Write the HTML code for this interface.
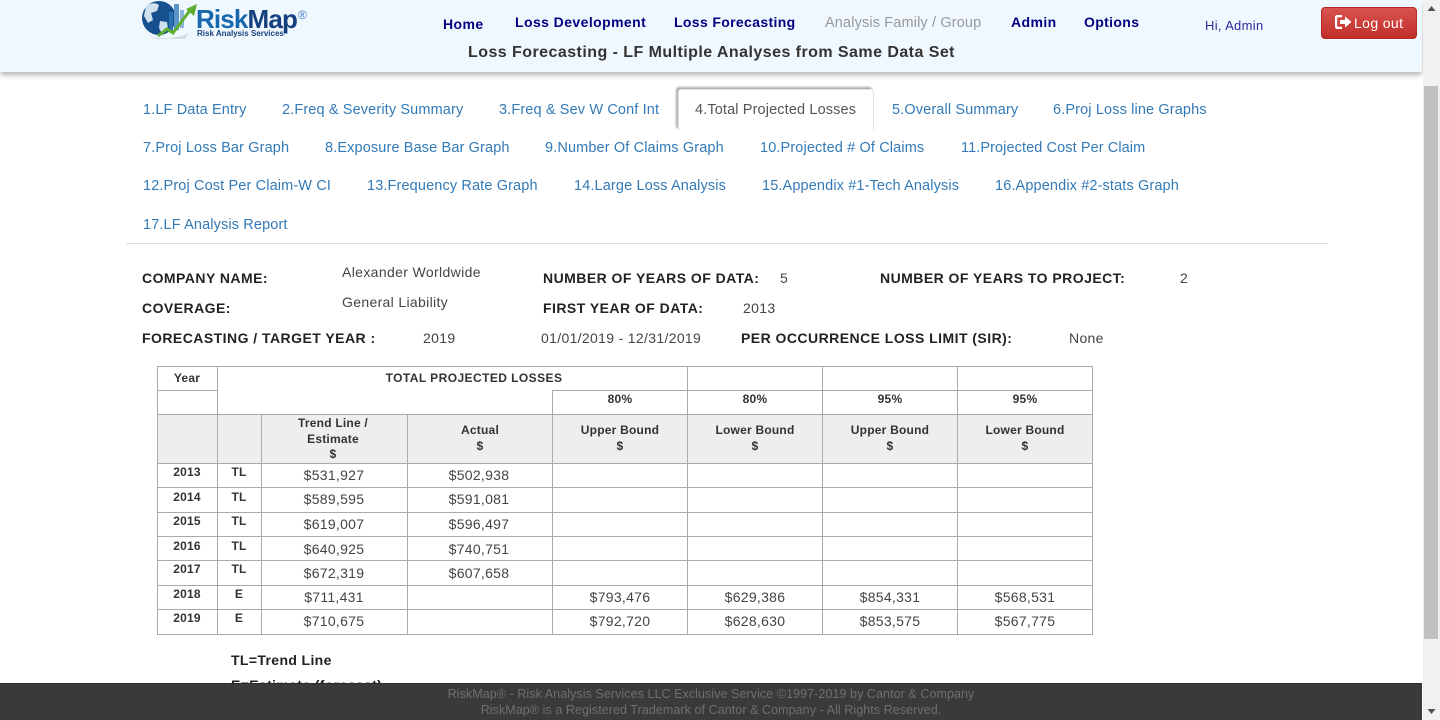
<!DOCTYPE html>
<html><head><meta charset="utf-8"><title>RiskMap</title>
<style>
html,body{margin:0;padding:0;width:1440px;height:720px;overflow:hidden;background:#fff;font-family:"Liberation Sans",Arial,sans-serif}
.t{position:absolute;white-space:nowrap;line-height:16px}
.tab{color:#337ab7;font-size:14.5px;letter-spacing:.13px}
.nav{color:#000080;font-size:14px;font-weight:bold;letter-spacing:.42px}
.l{color:#222;font-size:14px;font-weight:bold;letter-spacing:.46px}
.v{color:#444;font-size:14px;letter-spacing:.33px}
.h{position:absolute;height:1px;background:#aaa}
.w{position:absolute;width:1px;background:#aaa}
.c{position:absolute;white-space:nowrap;text-align:center;width:200px;line-height:16px}
.b{font-size:12px;font-weight:bold;color:#333;letter-spacing:.22px}
.d{font-size:14px;color:#444;letter-spacing:.28px}
.g{position:absolute;background:#eee}
</style></head><body>

<div class="t" style="left:231px;top:652px;font-size:14px;font-weight:bold;color:#222;letter-spacing:.36px">TL=Trend Line</div>
<div class="t" style="left:231px;top:677px;font-size:14px;font-weight:bold;color:#222;letter-spacing:.36px">E=Estimate (forecast)</div>

<div style="position:absolute;left:0;top:0;width:1422px;height:72px;background:#f0f8ff;box-shadow:0 3px 6px rgba(0,0,0,.3);border-radius:0 0 2px 2px"></div>

<svg style="position:absolute;left:141px;top:0" width="60" height="42" viewBox="0 0 60 42">
<path d="M8 36c12 4 28 3 40-3l-4 6H16z" fill="#c8d0d8" opacity=".75"/>
<circle cx="18" cy="18" r="17" fill="#17508f"/>
<path d="M5 6c4-3 9-4 13-1l-2 6-6 2 2 7-5 3-4-7zM19 21l7 1 1 7-6 5-3-6z" fill="#cfe0ee"/>
<path d="M28 12h4v19h-4z" fill="#2a6fb0"/><path d="M33 4h5v26h-5z" fill="#5c94c8"/><path d="M39 10h4v18h-4z" fill="#8cb4d8"/>
<path d="M17 36l9-7 6 4 18-24" fill="none" stroke="#5fae2e" stroke-width="3"/>
<path d="M45 9l11-5-3 12z" fill="#5fae2e"/>
</svg>
<div class="t" style="left:196px;top:4px;font-size:26px;line-height:30px;font-weight:bold;letter-spacing:-.85px;color:#1868ad">Risk<span style="color:#14407f">Map</span></div>
<div class="t" style="left:298px;top:9px;font-size:12px;line-height:12px;color:#3a78b5">®</div>
<div class="t" style="left:197px;top:29px;font-size:8px;line-height:9px;font-weight:bold;color:#17407a">Risk Analysis Services</div>

<div class="t nav" style="left:443px;top:16px">Home</div>
<div class="t nav" style="left:515px;top:14px">Loss Development</div>
<div class="t nav" style="left:674px;top:14px;letter-spacing:.35px">Loss Forecasting</div>
<div class="t" style="left:825px;top:15px;font-size:14.5px;color:#999;letter-spacing:.14px">Analysis Family / Group</div>
<div class="t nav" style="left:1011px;top:14px">Admin</div>
<div class="t nav" style="left:1084px;top:14px;letter-spacing:.35px">Options</div>
<div class="t" style="left:1205px;top:18px;font-size:13px;color:#2a2a9a;letter-spacing:.32px">Hi, Admin</div>
<div class="t" style="left:468px;top:45px;font-size:16px;font-weight:bold;color:#333;letter-spacing:.45px">Loss Forecasting - LF Multiple Analyses from Same Data Set</div>

<div style="position:absolute;left:1321px;top:7px;width:94px;height:30px;border:1px solid #b52b27;border-radius:4px;background:linear-gradient(#d9534f,#c12e2a)"></div>
<svg style="position:absolute;left:1335px;top:15px" width="17" height="14" viewBox="0 0 17 14"><path d="M7 1H3Q1 1 1 3v8q0 2 2 2h4" fill="none" stroke="#fff" stroke-width="2.4"/><path d="M5 5h5V1.500L16.500 7 10 12.500V9H5z" fill="#fff"/></svg>
<div class="t" style="left:1354px;top:15px;font-size:14px;color:#fff;letter-spacing:.38px">Log out</div>

<div style="position:absolute;left:1423px;top:0;width:17px;height:720px;background:#f1f1f1"></div>
<div style="position:absolute;left:1424px;top:86px;width:14px;height:553px;background:#c1c1c1"></div>
<svg style="position:absolute;left:1423px;top:0" width="17" height="720"><path d="M4.500 11L8.500 6l4 5z" fill="#505050"/><path d="M4.500 709l4 5 4-5z" fill="#505050"/></svg>

<div style="position:absolute;left:678px;top:89px;width:194px;height:40px;background:#fff;border:1px solid #e4e4e4;border-bottom:0;border-radius:3px 3px 0 0;box-shadow:-2px -2px 2px #aaa"></div>

<div class="t tab" style="left:143px;top:101.500px">1.LF Data Entry</div>
<div class="t tab" style="left:282px;top:101.500px">2.Freq &amp; Severity Summary</div>
<div class="t tab" style="left:499px;top:101.500px">3.Freq &amp; Sev W Conf Int</div>
<div class="t tab" style="left:695px;top:101.500px;color:#555">4.Total Projected Losses</div>
<div class="t tab" style="left:892px;top:101.500px">5.Overall Summary</div>
<div class="t tab" style="left:1053px;top:101.500px">6.Proj Loss line Graphs</div>
<div class="t tab" style="left:143px;top:140px">7.Proj Loss Bar Graph</div>
<div class="t tab" style="left:325px;top:140px">8.Exposure Base Bar Graph</div>
<div class="t tab" style="left:545px;top:140px">9.Number Of Claims Graph</div>
<div class="t tab" style="left:760px;top:140px">10.Projected # Of Claims</div>
<div class="t tab" style="left:961px;top:140px;letter-spacing:.09px">11.Projected Cost Per Claim</div>
<div class="t tab" style="left:143px;top:178px">12.Proj Cost Per Claim-W CI</div>
<div class="t tab" style="left:367px;top:178px">13.Frequency Rate Graph</div>
<div class="t tab" style="left:574px;top:178px">14.Large Loss Analysis</div>
<div class="t tab" style="left:762px;top:178px">15.Appendix #1-Tech Analysis</div>
<div class="t tab" style="left:995px;top:178px">16.Appendix #2-stats Graph</div>
<div class="t tab" style="left:143px;top:217px">17.LF Analysis Report</div>
<div style="position:absolute;left:126px;top:243px;width:1202px;height:1px;background:#ddd"></div>

<div class="t l" style="left:142px;top:270px">COMPANY NAME:</div>
<div class="t v" style="left:342px;top:264px;letter-spacing:.36px">Alexander Worldwide</div>
<div class="t l" style="left:543px;top:270px">NUMBER OF YEARS OF DATA:</div>
<div class="t v" style="left:780px;top:270px">5</div>
<div class="t l" style="left:880px;top:270px">NUMBER OF YEARS TO PROJECT:</div>
<div class="t v" style="left:1180px;top:270px">2</div>
<div class="t l" style="left:142px;top:300px">COVERAGE:</div>
<div class="t v" style="left:342px;top:294px">General Liability</div>
<div class="t l" style="left:543px;top:300px">FIRST YEAR OF DATA:</div>
<div class="t v" style="left:743px;top:300px">2013</div>
<div class="t l" style="left:142px;top:330px">FORECASTING / TARGET YEAR :</div>
<div class="t v" style="left:423px;top:330px">2019</div>
<div class="t v" style="left:541px;top:330px">01/01/2019 - 12/31/2019</div>
<div class="t l" style="left:741px;top:330px">PER OCCURRENCE LOSS LIMIT (SIR):</div>
<div class="t v" style="left:1069px;top:330px">None</div>

<!-- table shading -->
<div class="g" style="left:157px;top:414px;width:935px;height:49px"></div>

<!-- horizontals -->
<div class="h" style="left:157px;top:366px;width:936px"></div>
<div class="h" style="left:157px;top:390px;width:61px"></div>
<div class="h" style="left:552px;top:390px;width:541px"></div>
<div class="h" style="left:157px;top:414px;width:936px"></div>
<div class="h" style="left:157px;top:463px;width:936px"></div>
<div class="h" style="left:157px;top:487px;width:936px"></div>
<div class="h" style="left:157px;top:512px;width:936px"></div>
<div class="h" style="left:157px;top:536px;width:936px"></div>
<div class="h" style="left:157px;top:560px;width:936px"></div>
<div class="h" style="left:157px;top:585px;width:936px"></div>
<div class="h" style="left:157px;top:609px;width:936px"></div>
<div class="h" style="left:157px;top:634px;width:936px"></div>
<!-- verticals -->
<div class="w" style="left:157px;top:366px;height:269px"></div>
<div class="w" style="left:217px;top:366px;height:269px"></div>
<div class="w" style="left:261px;top:414px;height:221px"></div>
<div class="w" style="left:407px;top:414px;height:221px"></div>
<div class="w" style="left:552px;top:390px;height:245px"></div>
<div class="w" style="left:687px;top:366px;height:269px"></div>
<div class="w" style="left:822px;top:366px;height:269px"></div>
<div class="w" style="left:957px;top:366px;height:269px"></div>
<div class="w" style="left:1092px;top:366px;height:269px"></div>

<!-- table header -->
<div class="c b" style="left:87px;top:370px">Year</div>
<div class="c b" style="left:374px;top:370px;letter-spacing:.43px">TOTAL PROJECTED LOSSES</div>
<div class="c b" style="left:520px;top:391px">80%</div>
<div class="c b" style="left:655px;top:391px">80%</div>
<div class="c b" style="left:790px;top:391px">95%</div>
<div class="c b" style="left:925px;top:391px">95%</div>
<div class="c b" style="left:233px;top:415px">Trend Line /</div>
<div class="c b" style="left:233px;top:431px">Estimate</div>
<div class="c b" style="left:233px;top:446px">$</div>
<div class="c b" style="left:380px;top:422px">Actual</div>
<div class="c b" style="left:380px;top:438px">$</div>
<div class="c b" style="left:520px;top:422px">Upper Bound</div>
<div class="c b" style="left:520px;top:438px">$</div>
<div class="c b" style="left:655px;top:422px">Lower Bound</div>
<div class="c b" style="left:655px;top:438px">$</div>
<div class="c b" style="left:790px;top:422px">Upper Bound</div>
<div class="c b" style="left:790px;top:438px">$</div>
<div class="c b" style="left:925px;top:422px">Lower Bound</div>
<div class="c b" style="left:925px;top:438px">$</div>

<!-- rows -->
<div class="c b" style="left:87px;top:464px">2013</div><div class="c b" style="left:139px;top:464px">TL</div><div class="c d" style="left:234px;top:467px">$531,927</div><div class="c d" style="left:379px;top:467px">$502,938</div>
<div class="c b" style="left:87px;top:489px">2014</div><div class="c b" style="left:139px;top:489px">TL</div><div class="c d" style="left:234px;top:491px">$589,595</div><div class="c d" style="left:379px;top:491px">$591,081</div>
<div class="c b" style="left:87px;top:513px">2015</div><div class="c b" style="left:139px;top:513px">TL</div><div class="c d" style="left:234px;top:516px">$619,007</div><div class="c d" style="left:379px;top:516px">$596,497</div>
<div class="c b" style="left:87px;top:538px">2016</div><div class="c b" style="left:139px;top:538px">TL</div><div class="c d" style="left:234px;top:541px">$640,925</div><div class="c d" style="left:379px;top:541px">$740,751</div>
<div class="c b" style="left:87px;top:561px">2017</div><div class="c b" style="left:139px;top:561px">TL</div><div class="c d" style="left:234px;top:565px">$672,319</div><div class="c d" style="left:379px;top:565px">$607,658</div>
<div class="c b" style="left:87px;top:586px">2018</div><div class="c b" style="left:139px;top:586px">E</div><div class="c d" style="left:234px;top:589px">$711,431</div><div class="c d" style="left:520px;top:589px">$793,476</div><div class="c d" style="left:655px;top:589px">$629,386</div><div class="c d" style="left:790px;top:589px">$854,331</div><div class="c d" style="left:925px;top:589px">$568,531</div>
<div class="c b" style="left:87px;top:610px">2019</div><div class="c b" style="left:139px;top:610px">E</div><div class="c d" style="left:234px;top:613px">$710,675</div><div class="c d" style="left:520px;top:613px">$792,720</div><div class="c d" style="left:655px;top:613px">$628,630</div><div class="c d" style="left:790px;top:613px">$853,575</div><div class="c d" style="left:925px;top:613px">$567,775</div>

<!-- footer -->
<div style="position:absolute;left:0;top:683px;width:1422px;height:37px;background:#3a3a3a;border-top:1px solid #2c2c2c;box-sizing:border-box"></div>
<div class="c" style="left:411px;width:600px;top:686px;font-size:12.500px;color:#6f6f6f;letter-spacing:.07px">RiskMap® - Risk Analysis Services LLC Exclusive Service ©1997-2019 by Cantor &amp; Company</div>
<div class="c" style="left:411px;width:600px;top:702px;font-size:12.500px;color:#6f6f6f;letter-spacing:.07px">RiskMap® is a Registered Trademark of Cantor &amp; Company - All Rights Reserved.</div>
</body></html>
